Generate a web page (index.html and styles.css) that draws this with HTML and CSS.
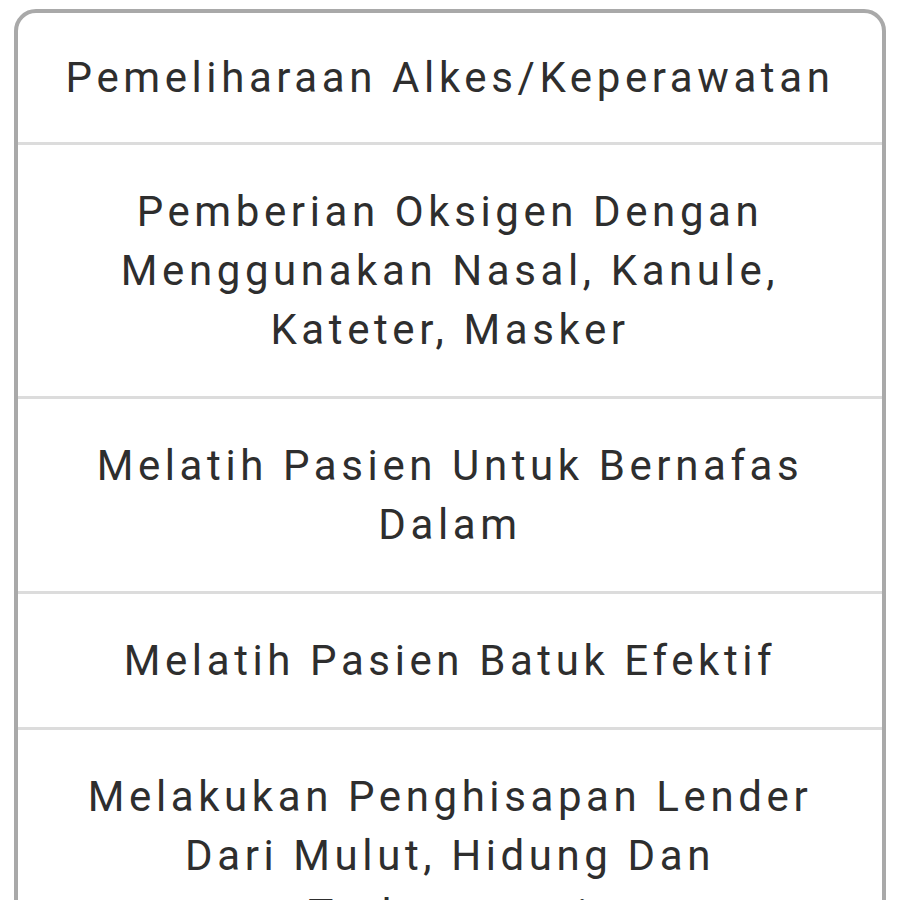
FILE: index.html
```html
<!DOCTYPE html>
<html>
<head>
<meta charset="utf-8">
<link rel="stylesheet" href="styles.css">
</head>
<body>
<div class="card">
  <div class="row">Pemeliharaan Alkes/Keperawatan</div>
  <div class="row">Pemberian Oksigen Dengan Menggunakan Nasal, Kanule, Kateter, Masker</div>
  <div class="row">Melatih Pasien Untuk Bernafas Dalam</div>
  <div class="row">Melatih Pasien Batuk Efektif</div>
  <div class="row">Melakukan Penghisapan Lender Dari Mulut, Hidung Dan Trakeostomi</div>
</div>
</body>
</html>
```
FILE: styles.css
```css
html, body {
  margin: 0;
  padding: 0;
  background: #ffffff;
  height: 900px;
  overflow: hidden;
}
body {
  padding: 9px 14px 0 14px;
  font-family: Roboto, "Noto Sans", sans-serif;
}
.card {
  border: 4px solid #a9a9a9;
  border-radius: 22px;
  background: #fff;
  overflow: hidden;
}
.row {
  padding: 37px 40px;
  text-align: center;
  font-size: 42px;
  line-height: 59px;
  letter-spacing: 4.6px;
  color: #2e2e2e;
  border-top: 3px solid #dcdcdc;
}
.row:first-child {
  border-top: none;
  padding-top: 35px;
  padding-bottom: 35px;
}
```
